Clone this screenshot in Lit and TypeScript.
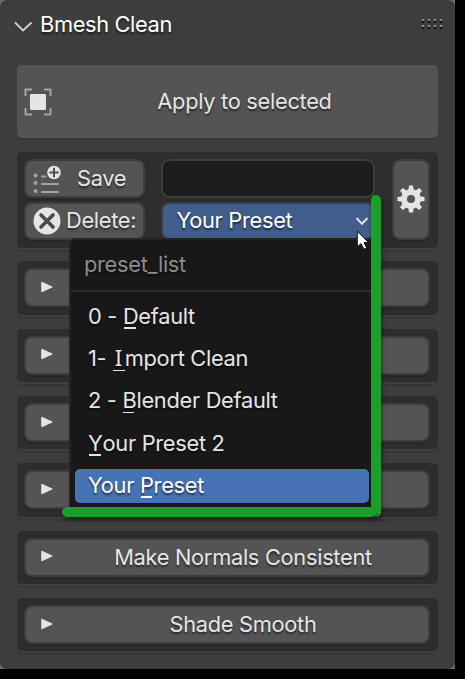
import { LitElement, html, css, svg } from "lit";
import { customElement, state } from "lit/decorators.js";
import { classMap } from "lit/directives/class-map.js";

interface Preset {
  before: string;
  key: string;
  after: string;
}

const PRESETS: Preset[] = [
  { before: "0 - ", key: "D", after: "efault" },
  { before: "1- ", key: "I", after: "mport Clean" },
  { before: "2 - ", key: "B", after: "lender Default" },
  { before: "", key: "Y", after: "our Preset 2" },
  { before: "Your ", key: "P", after: "reset" },
];

const SECTIONS = ["", "", "", "", "Make Normals Consistent", "Shade Smooth"];

const gearTeeth = [0, 45, 90, 135, 180, 225, 270, 315];

@customElement("app-root")
export class AppRoot extends LitElement {
  @state() private selected = 4;

  static styles = css`
    :host {
      display: block;
      position: relative;
      width: 465px;
      height: 679px;
      overflow: hidden;
      background: #000;
      color: #e5e5e5;
      font: 21.8px/34px Inter, "Liberation Sans", sans-serif;
      letter-spacing: -0.29px;
      text-shadow: 0 2px 2px rgba(0, 0, 0, 0.55);
      white-space: nowrap;
    }
    * { box-sizing: border-box; }
    svg { display: block; flex: none; }
    .backing { width: 455px; height: 669px; background: #6b6b6b; }
    .panel {
      width: 455px;
      height: 669px;
      padding: 0 17px;
      border-radius: 7px;
      background: #3d3d3d;
      display: flex;
      flex-direction: column;
    }
    .header {
      height: 65px;
      display: flex;
      align-items: flex-start;
      padding: 7px 0 0;
      margin: 0 -5px;
      color: #fff;
      flex: none;
      letter-spacing: -0.35px;
    }
    .header .chevron { margin: 11px 6px 0 0; }
    .header .grip { margin: 12px 0 0 auto; }
    .apply {
      flex: none;
      height: 73px;
      display: flex;
      align-items: center;
      padding-left: 7px;
      border-radius: 5px;
      background: #545454;
      box-shadow: 0 2px 0 #353535;
      margin-bottom: 14px;
    }
    .apply span { flex: 1; text-align: center; padding-right: 1px; margin-top: -2px; }
    .box {
      flex: none;
      border-radius: 5px;
      background: #2d2d2d;
      box-shadow: 0 2px 0 #3f3f3f, 0 4px 0 #363636;
      padding: 7px 8px 0 7px;
    }
    .presets {
      height: 96px;
      display: grid;
      grid-template-columns: 121px 214px 38px;
      grid-template-rows: 39px 38px;
      column-gap: 16.4px;
      row-gap: 4px;
      margin-bottom: 13.4px;
    }
    .button {
      border: 2px solid #3d3d3d;
      border-radius: 8px;
      background: #545454;
      box-shadow: 0 2px 0 #272727;
      display: flex;
      align-items: center;
    }
    .save { padding-left: 7px; gap: 16px; }
    .delete { padding-left: 7px; gap: 5px; letter-spacing: -0.3px; }
    .save span { margin-top: -2px; }
    .delete span, .dropdown span { margin-top: -3px; }
    .field { background: #1d1d1d; box-shadow: none; }
    .dropdown {
      background: #405d8b;
      color: #fff;
      padding: 0 4px 0 13px;
      justify-content: space-between;
    }
    .gear { grid-column: 3; grid-row: 1 / 3; justify-content: center; }
    .gear svg { margin-top: -2px; }
    .sections { display: flex; flex-direction: column; gap: 13.8px; }
    .section { height: 53.5px; }
    .section .button { height: 39px; padding-left: 15px; }
    .section .label { flex: 1; text-align: center; padding-left: 5px; }
    .section svg { margin-top: -1.5px; }
    .menu {
      position: absolute;
      left: 69px;
      top: 238px;
      width: 302px;
      height: 269px;
      border: 2px solid #242424;
      border-right: 0;
      border-bottom: 0;
      border-radius: 7px 0 0 0;
      background: #181818;
    }
    .title {
      height: 52px;
      padding: 7px 0 0 13px;
      border-bottom: 2px solid #2d2d2d;
      color: #8c8c8c;
    }
    .items {
      display: flex;
      flex-direction: column;
      gap: 8.3px;
      padding: 7.8px 2px 0 4px;
    }
    .item { height: 34px; line-height: 32px; border-radius: 5px; padding-left: 13px; }
    .item.active { background: #4772b3; color: #fff; }
    .key { position: relative; }
    .key.slab { font-family: "Noto Sans", sans-serif; font-size: 22.4px; line-height: 1; letter-spacing: 2.5px; padding-left: 2.5px; }
    .key::after {
      content: "";
      position: absolute;
      left: 1px;
      right: 2px;
      bottom: 0;
      height: 1.5px;
      background: currentColor;
    }
    .key.slab::after { bottom: 2px; left: 1px; right: 0; }
    .mark { position: absolute; background: #1c9e2b; border-radius: 5px; }
    .mark.side {
      left: 371px; top: 195px; width: 10px; height: 322px;
      box-shadow: 1px 3px 5px rgba(0, 0, 0, 0.45);
    }
    .mark.base {
      left: 62px; top: 507px; width: 314px; height: 10px;
      box-shadow: 1px 3px 5px rgba(0, 0, 0, 0.45);
    }
    .mark.corner { left: 371px; top: 490px; width: 10px; height: 23px; border-radius: 0; }
    .cursor { position: absolute; left: 356px; top: 230px; }
  `;

  private renderItem(p: Preset, i: number) {
    return html`<div
      class=${classMap({ item: true, active: i === this.selected })}
      @click=${() => (this.selected = i)}
    >${p.before}<span class=${classMap({ key: true, slab: p.key === "I" })}>${p.key}</span>${p.after}</div>`;
  }

  render() {
    return html`
      <div class="backing">
        <div class="panel">
          <div class="header">
            <svg class="chevron" width="22" height="16" fill="none" stroke="#cfcfcf" stroke-width="1.9">
              <path d="M3 4.5 11 12.5 19.5 4.5" />
            </svg>
            <span>Bmesh Clean</span>
            <svg class="grip" width="21" height="11" shape-rendering="crispEdges">
              ${[0, 6, 12, 18].map((x) => svg`
                <path fill="#919191" d="M${x} 0h2v2h-2zM${x} 6h2v2h-2z" />
                <path fill="#050505" d="M${x} 2h2v2h-2zM${x} 8h2v2h-2z" />`)}
            </svg>
          </div>

          <div class="apply">
            <svg width="28" height="28">
              <path fill="none" stroke="#a3a3a3" stroke-width="2"
                d="M1.5 8V1.5H8M20 1.5H26.5V8M26.5 20V26.5H20M8 26.5H1.5V20" />
              <rect x="6" y="6" width="16" height="16" rx="1" fill="#e5e5e5" />
            </svg>
            <span>Apply to selected</span>
          </div>

          <div class="box presets">
            <div class="button save">
              <svg width="28" height="30" fill="none">
                <g fill="#a3a3a3">
                  <circle cx="2.5" cy="11.5" r="2" /><circle cx="2.5" cy="19" r="2" /><circle cx="2.5" cy="27" r="2" />
                </g>
                <path stroke="#a3a3a3" stroke-width="2" stroke-linecap="round" d="M9 12.5h3.5M9 20h16M9 28h16" />
                <circle cx="21" cy="8.5" r="6.8" fill="#e5e5e5" />
                <path stroke="#4d4d4d" stroke-width="2" d="M21 3.8v9.4M16.3 8.5h9.4" />
              </svg>
              <span>Save</span>
            </div>
            <div class="button field"></div>
            <div class="button gear">
              <svg width="28" height="28" viewBox="-14 -14 28 28">
                <g fill="#e5e5e5">
                  ${gearTeeth.map((a) => svg`<path transform="rotate(${a})" d="M-2.8-8 -2-13.5H2L2.8-8z" />`)}
                </g>
                <circle r="7" fill="none" stroke="#e5e5e5" stroke-width="6" />
              </svg>
            </div>
            <div class="button delete">
              <svg width="28" height="28">
                <circle cx="14" cy="14" r="13.5" fill="#e5e5e5" />
                <path d="M8 8 20 20M20 8 8 20" stroke="#4a4a4a" stroke-width="3.6" stroke-linecap="round" />
              </svg>
              <span>Delete:</span>
            </div>
            <div class="button dropdown">
              <span>Your Preset</span>
              <svg width="14" height="10" fill="none" stroke="#dce2ec" stroke-width="2">
                <path d="M1.5 2 7 7.7 12.5 2" />
              </svg>
            </div>
          </div>

          <div class="sections">
            ${SECTIONS.map((label) => html`
              <div class="box section">
                <div class="button">
                  <svg width="12" height="12"><path fill="#e5e5e5" stroke="#e5e5e5" stroke-linejoin="round" d="M.8 1.2V10.8L11.2 6z" /></svg>
                  <span class="label">${label}</span>
                </div>
              </div>`)}
          </div>
        </div>
      </div>

      <div class="mark side"></div>
      <div class="mark base"></div>
      <div class="menu">
        <div class="title">preset_list</div>
        <div class="items">${PRESETS.map((p, i) => this.renderItem(p, i))}</div>
      </div>
      <div class="mark corner"></div>
      <svg class="cursor" width="14" height="21">
        <path fill="#fff" stroke="#111" stroke-width="1" d="M1.3 1V17L5 13.6 8 19.3 10.7 18 8 12.5H12.5z" />
      </svg>
    `;
  }
}
